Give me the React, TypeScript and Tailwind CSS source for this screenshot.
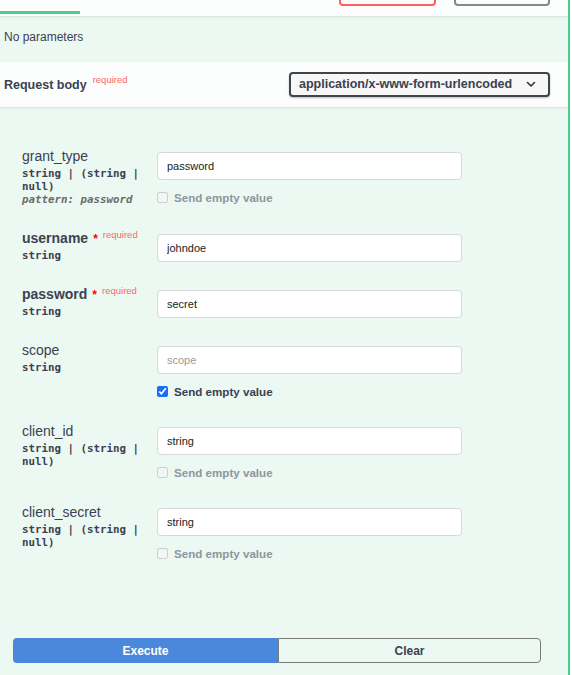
import React from 'react';

type Param = {
  name: string;
  required?: boolean;
  type: string;
  pattern?: string;
  value?: string;
  placeholder?: string;
  empty?: 'on' | 'off' | 'none';
};

const params: Param[] = [
  { name: 'grant_type', type: 'string | (string | null)', pattern: 'pattern: password', value: 'password', empty: 'off' },
  { name: 'username', required: true, type: 'string', value: 'johndoe', empty: 'none' },
  { name: 'password', required: true, type: 'string', value: 'secret', empty: 'none' },
  { name: 'scope', type: 'string', placeholder: 'scope', empty: 'on' },
  { name: 'client_id', type: 'string | (string | null)', value: 'string', empty: 'off' },
  { name: 'client_secret', type: 'string | (string | null)', value: 'string', empty: 'off' },
];

const mono = "font-['DejaVu_Sans_Mono',Menlo,monospace]";

const ParamRow: React.FC<{ p: Param }> = ({ p }) => (
  <div className="flex items-start">
    <div className="w-[135px] pr-[12px]">
      <div className={`h-[16px] text-[14px] leading-[16px] whitespace-nowrap text-[#3b4151] ${p.required ? 'font-bold' : ''}`}>
        {p.name}
        {p.required && (
          <>
            <span className="ml-[5px] text-[#ff0000] text-[12px] leading-none">*</span>
            <span className="relative -top-[5px] pl-[5px] text-[9.5px] leading-none font-normal text-[#ff6666]">required</span>
          </>
        )}
      </div>
      <div className={`${mono} mt-[3px] text-[10.8px] leading-[13px] font-bold text-[#3b4151]`}>{p.type}</div>
      {p.pattern && (
        <div className={`${mono} text-[10.8px] leading-[13px] font-bold italic text-[#6b6b6b]`}>{p.pattern}</div>
      )}
    </div>
    <div className="pt-[4px]">
      <input
        readOnly
        value={p.value ?? ''}
        placeholder={p.placeholder}
        className="block w-[305px] h-[28px] px-[9px] rounded-[4px] border border-[#d9d9d9] bg-white text-[11px] text-[#222] placeholder:text-[#9a9a9a] outline-none"
      />
      {p.empty !== 'none' && (
        <label className="mt-[10px] flex items-center h-[15px]">
          <input
            type="checkbox"
            readOnly
            checked={p.empty === 'on'}
            disabled={p.empty === 'off'}
            className="w-[11px] h-[11px] m-0 accent-[#1a6ef5]"
          />
          <span
            className={`ml-[6px] text-[11.6px] leading-[14px] font-bold ${p.empty === 'on' ? 'text-[#3b4151]' : 'text-[#8e969d]'}`}
          >
            Send empty value
          </span>
        </label>
      )}
    </div>
  </div>
);

export default function App() {
  return (
    <div className="w-[572px] h-[675px] bg-white font-['Liberation_Sans',Arial,sans-serif] text-[#3b4151]">
      <div className="w-[570px] h-full bg-[#ecf8f2] border-r-2 border-[#49cc90] flex flex-col overflow-hidden">
        {/* tab header */}
        <div className="relative z-10 shadow-[0_1px_2px_rgba(0,0,0,0.1)] bg-[#fcfefd]">
          <div className="h-[16px] overflow-hidden flex items-start">
            <div className="w-[80px] h-[3px] mt-[11px] bg-[#49cc90]" />
            <div className="ml-auto mr-[18px] flex gap-[18px] -mt-[20px]">
              <div className="w-[97px] h-[26px] rounded-[4px] border-2 border-[#ff6060]" />
              <div className="w-[96px] h-[26px] rounded-[4px] border-2 border-[#888]" />
            </div>
          </div>
        </div>

        <div className="h-[46px] flex items-center pb-[4px] px-[4px] text-[12px]">No parameters</div>

        {/* request body header */}
        <div className="relative z-10 h-[45px] flex items-center bg-[#fcfefd] shadow-[0_1px_2px_rgba(0,0,0,0.1)] pl-[4px] pr-[18px]">
          <span className="text-[12.5px] font-bold pt-[2px]">Request body</span>
          <span className="relative -top-[4px] ml-[6px] text-[9.5px] text-[#ff6666]">required</span>
          <div className="ml-auto w-[261px] h-[25px] rounded-[4px] border-2 border-[#41444e] bg-[#f7f7f7] shadow-[0_1px_2px_rgba(0,0,0,0.25)] flex items-center pl-[8px] pr-[12px]">
            <span className="text-[12.5px] font-bold">application/x-www-form-urlencoded</span>
            <svg className="ml-auto" width="10" height="7" viewBox="0 0 10 7" fill="none">
              <path d="M1.5 1.5L5 5L8.5 1.5" stroke="#303030" strokeWidth="1.6" strokeLinecap="round" strokeLinejoin="round" />
            </svg>
          </div>
        </div>

        {/* form */}
        <div className="pt-[41px] pl-[22px] flex flex-col gap-[24px]">
          {params.map((p) => (
            <ParamRow key={p.name} p={p} />
          ))}
        </div>

        <div className="mt-[77px] ml-[13px] flex w-[528px] h-[25px]">
          <button className="w-[265px] h-full rounded-l-[4px] bg-[#4a88db] text-white text-[12px] font-bold">Execute</button>
          <button className="flex-1 h-full rounded-r-[4px] border-[1.5px] border-[#7a7a7a] text-[12px] font-bold text-[#3b4151]">Clear</button>
        </div>
      </div>
    </div>
  );
}
